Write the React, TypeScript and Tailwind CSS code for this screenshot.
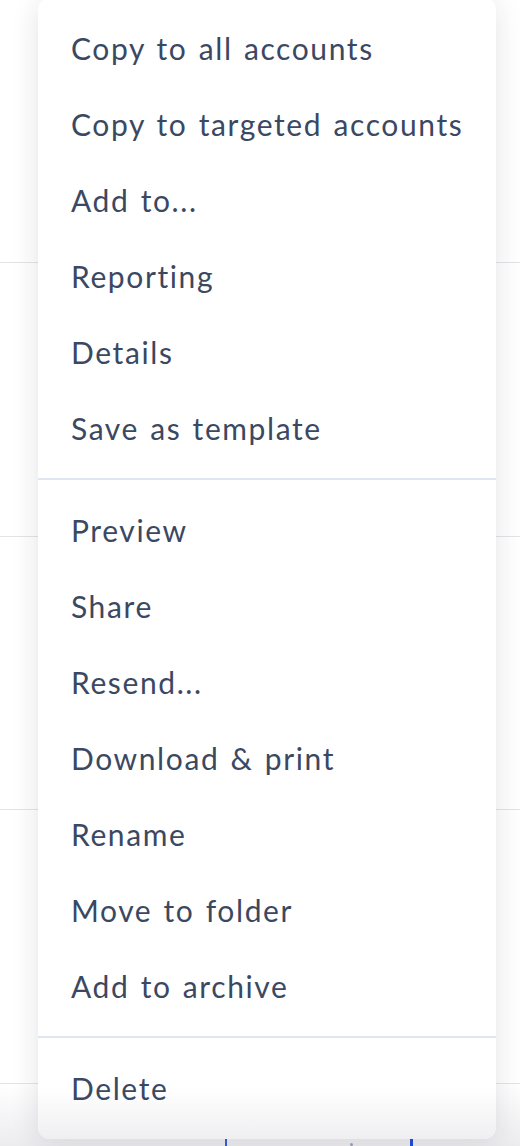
import React from "react";

const groups = [
  ["Copy to all accounts", "Copy to targeted accounts", "Add to...", "Reporting", "Details", "Save as template"],
  ["Preview", "Share", "Resend...", "Download & print", "Rename", "Move to folder", "Add to archive"],
  ["Delete"],
];

export default function App() {
  return (
    <div className="relative h-[1146px] w-[520px] overflow-hidden bg-white" style={{ fontFamily: "Lato, 'Noto Sans', sans-serif" }}>
      {/* page behind the menu */}
      <div className="flex flex-col">
        <div className="h-[263px] border-b border-[#e3e3e8]" />
        <div className="h-[274px] border-b border-[#e3e3e8]" />
        <div className="h-[273px] border-b border-[#e3e3e8]" />
        <div className="h-[274px] border-b border-[#e3e3e8]" />
        <div className="flex h-[62px] items-end bg-gradient-to-b from-white to-[#ececef]">
          <div className="ml-[225px] h-[8px] w-[2px] bg-[#3b5bdb]" />
          <div className="ml-[123px] h-[3px] w-[3px] rounded-full bg-[#9aa3b5]" />
          <div className="ml-[57px] h-[8px] w-[3px] bg-[#1d4ed8]" />
        </div>
      </div>

      {/* dropdown menu */}
      <div className="absolute left-[38px] top-[-2px] w-[458px] overflow-hidden rounded-xl bg-white shadow-[0_4px_28px_rgba(30,35,60,0.12)]">
        {groups.map((items, gi) => (
          <div
            key={gi}
            className={
              gi > 0
                ? gi === groups.length - 1
                  ? "border-t-2 border-[#dfe6f1] bg-gradient-to-b from-white via-white to-[#efeff1] pt-3 pb-[13px]"
                  : "border-t-2 border-[#dfe6f1] py-3"
                : "py-3"
            }
          >
            {items.map((label) => (
              <div key={label} className="flex h-[76px] items-center pl-[33px] text-[30px] tracking-[1.6px] [word-spacing:2px] text-[#3b4862]">
                {label}
              </div>
            ))}
          </div>
        ))}
      </div>
    </div>
  );
}
